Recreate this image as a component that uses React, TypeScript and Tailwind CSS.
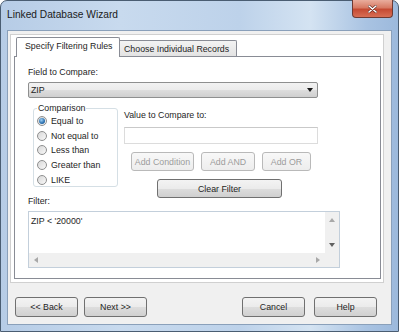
import React from "react";

function Btn({ label, cls, disabled = false }: { label: string; cls: string; disabled?: boolean }) {
  return (
    <div
      className={
        "border rounded-[3px] flex items-center justify-center shrink-0 " +
        (disabled
          ? "border-[#b9b9b9] bg-[linear-gradient(#f8f8f8,#ededed)] text-[#9c9c9c] "
          : "border-[#707070] bg-[linear-gradient(#f3f3f3_0%,#ebebeb_50%,#dddddd_51%,#d0d0d0_100%)] text-[#1e1e1e] ") +
        cls
      }
    >
      {label}
    </div>
  );
}

function Radio({ label, checked = false }: { label: string; checked?: boolean }) {
  return (
    <div className="h-[14.6px] flex items-center">
      <div className="w-[10px] h-[10px] rounded-full border border-[#8e8f8f] bg-[linear-gradient(135deg,#d8d8d8,#f8f8f8)] flex items-center justify-center shrink-0">
        {checked && (
          <div className="w-[6px] h-[6px] rounded-full bg-[radial-gradient(circle_at_40%_35%,#9fd0f5,#2a6fae_60%,#1d4f86)]" />
        )}
      </div>
      <span className="ml-[4px]">{label}</span>
    </div>
  );
}

export default function App() {
  return (
    <div className="w-[399px] h-[332px] overflow-hidden bg-white font-['Liberation_Sans',Arial,sans-serif] text-[8.8px] leading-[10px] text-[#1e1e1e]">
      <div className="w-full h-full flex flex-col rounded-t-[7px] border border-[#4a5d72] bg-[linear-gradient(90deg,#b6cce6_0%,#c8daee_30%,#bdd2ea_60%,#d4e3f2_78%,#a9c3e2_92%,#9cb9dc_100%)]">
        <div className="h-[29px] flex items-start justify-between shrink-0">
          <div className="pl-[6px] pt-[8px] text-[10.2px] leading-[11px] text-[#1b1b1b]">Linked Database Wizard</div>
          <div className="mr-[5px] -mt-[1px] w-[41px] h-[18px] rounded-b-[4px] border border-[#6e3a33] border-t-0 bg-[linear-gradient(#e9ad9d_0%,#d77a64_45%,#c54a33_55%,#d86e55_100%)] flex items-center justify-center">
            <svg width="9" height="8" viewBox="0 0 9 8">
              <path d="M1 1 L8 7 M8 1 L1 7" stroke="#5a2018" strokeWidth="2.6" strokeLinecap="round" />
              <path d="M1 1 L8 7 M8 1 L1 7" stroke="#ffffff" strokeWidth="1.6" strokeLinecap="round" />
            </svg>
          </div>
        </div>
        <div className="flex-1 mx-[6px] mb-[6px] bg-[#f0f0f0] border border-[#8aa0ba] flex flex-col">
          {/* white property area */}
          <div className="ml-[2px] mr-[7px] mt-[3px] h-[249px] bg-white border border-[#d0d0d0] flex flex-col">
            <div className="h-[21px] flex items-end pl-[5px] shrink-0">
              <div className="relative z-10 w-[104px] h-[20px] -mb-[1px] bg-white border border-b-0 border-[#898c95] rounded-t-[2px] flex items-center pl-[8px] pb-[3px]">
                Specify Filtering Rules
              </div>
              <div className="w-[117px] h-[16px] bg-[linear-gradient(#f3f3f3,#e3e3e3)] border border-b-0 border-l-0 border-[#898c95] rounded-tr-[2px] flex items-center pl-[4px]">
                Choose Individual Records
              </div>
            </div>
            <div className="ml-[3px] mr-[2px] h-[223px] border border-[#898c95] bg-white flex flex-col pl-[13px]">
              <div className="mt-[10px]">Field to Compare:</div>
              <div className="mt-[5px] w-[290px] h-[16px] border border-[#8e8f8f] rounded-[2px] bg-[linear-gradient(#f2f2f2_0%,#ebebeb_50%,#dddddd_51%,#cfcfcf_100%)] flex items-center justify-between pl-[2px] pr-[4px]">
                <span>ZIP</span>
                <svg width="6" height="4" viewBox="0 0 6 4">
                  <path d="M0 0 H6 L3 4 Z" fill="#1a1a1a" />
                </svg>
              </div>
              <div className="mt-[5px] h-[93px] flex items-start">
                <fieldset className="ml-[5px] w-[85px] h-[84px] border border-[#d5dfe5] rounded-[3px] pl-[3px] pt-[1px]">
                  <legend className="ml-[0px] px-[1px] leading-[10px]">Comparison</legend>
                  <Radio label="Equal to" checked />
                  <Radio label="Not equal to" />
                  <Radio label="Less than" />
                  <Radio label="Greater than" />
                  <Radio label="LIKE" />
                </fieldset>
                <div className="ml-[6px] flex flex-col">
                  <div className="mt-[7px]">Value to Compare to:</div>
                  <div className="mt-[7px] w-[194px] h-[17px] border border-[#dcdcdc] border-t-[#c9c9c9] bg-white" />
                  <div className="mt-[8px] flex">
                    <Btn label="Add Condition" disabled cls="ml-[7px] w-[63px] h-[19px]" />
                    <Btn label="Add AND" disabled cls="ml-[7px] w-[54px] h-[19px]" />
                    <Btn label="Add OR" disabled cls="ml-[7px] w-[49px] h-[19px]" />
                  </div>
                  <Btn label="Clear Filter" cls="mt-[8px] ml-[33px] w-[125px] h-[19px]" />
                </div>
              </div>
              <div>Filter:</div>
              <div className="mt-[5px] w-[312px] h-[57px] border border-[#c3cfdb] flex flex-col">
                <div className="flex-1 flex">
                  <div className="flex-1 pl-[2px] pt-[4px]">ZIP &lt; '20000'</div>
                  <div className="w-[14px] bg-[#f0f0f0] flex flex-col items-center justify-between py-[6px]">
                    <svg width="6" height="4" viewBox="0 0 6 4"><path d="M0 4 L3 0 L6 4 Z" fill="#a8a8a8" /></svg>
                    <svg width="6" height="4" viewBox="0 0 6 4"><path d="M0 0 H6 L3 4 Z" fill="#606060" /></svg>
                  </div>
                </div>
                <div className="h-[14px] flex">
                  <div className="flex-1 bg-[#f0f0f0] flex items-center justify-between px-[5px]">
                    <svg width="4" height="6" viewBox="0 0 4 6"><path d="M4 0 V6 L0 3 Z" fill="#a8a8a8" /></svg>
                    <svg width="4" height="6" viewBox="0 0 4 6"><path d="M0 0 V6 L4 3 Z" fill="#a8a8a8" /></svg>
                  </div>
                  <div className="w-[14px] bg-[#f0f0f0]" />
                </div>
              </div>
            </div>
          </div>
          <div className="mt-[14px] flex">
            <Btn label="<< Back" cls="ml-[7px] w-[63px] h-[20px]" />
            <Btn label="Next >>" cls="ml-[6px] w-[63px] h-[20px]" />
            <Btn label="Cancel" cls="ml-[95px] w-[63px] h-[20px]" />
            <Btn label="Help" cls="ml-[9px] w-[63px] h-[20px]" />
          </div>
        </div>
      </div>
    </div>
  );
}
